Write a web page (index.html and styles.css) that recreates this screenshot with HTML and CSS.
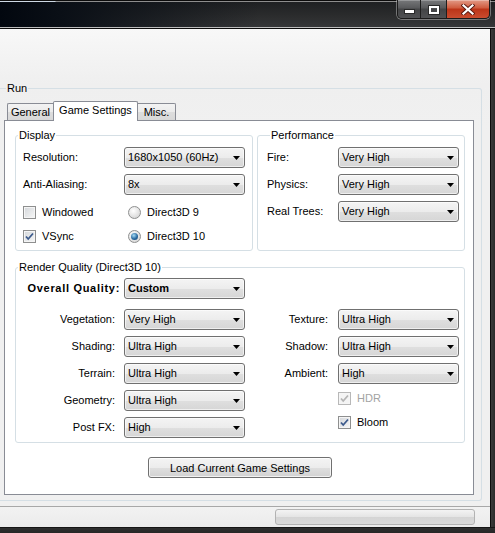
FILE: index.html
```html
<!DOCTYPE html>
<html lang="en">
<head>
    <meta charset="UTF-8">
    <meta name="viewport" content="width=device-width, initial-scale=1.0">
    <title>Game Settings</title>
    <link rel="stylesheet" href="styles.css">
</head>
<body>
    <div class="window">
        <div class="titlebar">
            <div class="caption-buttons">
                <span class="cap-btn cap-min">
                    <svg width="11" height="5" viewBox="0 0 11 5"><rect x="0.5" y="0.5" width="10" height="4" fill="#fff" stroke="#2a2a2a"/></svg>
                </span>
                <span class="cap-btn cap-max">
                    <svg width="12" height="10" viewBox="0 0 12 10"><rect x="0.5" y="0.5" width="11" height="9" fill="none" stroke="#2a2a2a"/><rect x="2" y="2" width="8" height="6" fill="none" stroke="#fff" stroke-width="2"/></svg>
                </span>
                <span class="cap-btn cap-close">
                    <svg width="14" height="11" viewBox="0 0 14 11"><path d="M2.5 1.5 L11.5 9.5 M11.5 1.5 L2.5 9.5" stroke="#5a1a10" stroke-width="4" stroke-linecap="square"/><path d="M2.5 1.5 L11.5 9.5 M11.5 1.5 L2.5 9.5" stroke="#fff" stroke-width="2.2" stroke-linecap="square"/></svg>
                </span>
            </div>
        </div>
        <div class="frame">
            <div class="client">
                <fieldset class="group run">
                    <legend>Run</legend>
                    <div class="tabs">
                        <span class="tab tab-first">General</span>
                        <span class="tab active">Game Settings</span>
                        <span class="tab tab-last">Misc.</span>
                    </div>
                    <div class="tab-panel">
                        <div class="top-groups">
                            <fieldset class="group display">
                                <legend>Display</legend>
                                <div class="display-body">
                                    <div class="field">
                                        <span class="label">Resolution:</span>
                                        <div class="combo"><span>1680x1050 (60Hz)</span><svg class="arrow" width="7" height="4" viewBox="0 0 7 4"><polygon points="0,0 7,0 3.5,4" fill="#000"/></svg></div>
                                    </div>
                                    <div class="field">
                                        <span class="label">Anti-Aliasing:</span>
                                        <div class="combo"><span>8x</span><svg class="arrow" width="7" height="4" viewBox="0 0 7 4"><polygon points="0,0 7,0 3.5,4" fill="#000"/></svg></div>
                                    </div>
                                    <div class="option-row">
                                        <span class="check-item">
                                            <span class="checkbox"></span>Windowed
                                        </span>
                                        <span class="check-item">
                                            <span class="radio"></span>Direct3D 9
                                        </span>
                                    </div>
                                    <div class="option-row">
                                        <span class="check-item">
                                            <span class="checkbox"><svg width="11" height="11" viewBox="0 0 11 11"><polyline points="2,5.5 4.2,8 9,2.5" fill="none" stroke="#3c5a8c" stroke-width="1.8"/></svg></span>VSync
                                        </span>
                                        <span class="check-item">
                                            <span class="radio"><span class="radio-dot"></span></span>Direct3D 10
                                        </span>
                                    </div>
                                </div>
                            </fieldset>
                            <fieldset class="group performance">
                                <legend>Performance</legend>
                                <div class="perf-body">
                                    <div class="field">
                                        <span class="label">Fire:</span>
                                        <div class="combo"><span>Very High</span><svg class="arrow" width="7" height="4" viewBox="0 0 7 4"><polygon points="0,0 7,0 3.5,4" fill="#000"/></svg></div>
                                    </div>
                                    <div class="field">
                                        <span class="label">Physics:</span>
                                        <div class="combo"><span>Very High</span><svg class="arrow" width="7" height="4" viewBox="0 0 7 4"><polygon points="0,0 7,0 3.5,4" fill="#000"/></svg></div>
                                    </div>
                                    <div class="field">
                                        <span class="label">Real Trees:</span>
                                        <div class="combo"><span>Very High</span><svg class="arrow" width="7" height="4" viewBox="0 0 7 4"><polygon points="0,0 7,0 3.5,4" fill="#000"/></svg></div>
                                    </div>
                                </div>
                            </fieldset>
                        </div>

                        <fieldset class="group render">
                            <legend>Render Quality (Direct3D 10)</legend>
                            <div class="render-body">
                                <div class="overall">
                                    <span class="label overall-label">Overall Quality:</span>
                                    <div class="combo bold"><span>Custom</span><svg class="arrow" width="7" height="4" viewBox="0 0 7 4"><polygon points="0,0 7,0 3.5,4" fill="#000"/></svg></div>
                                </div>
                                <div class="quality-grid">
                                    <span class="label">Vegetation:</span>
                                    <div class="combo"><span>Very High</span><svg class="arrow" width="7" height="4" viewBox="0 0 7 4"><polygon points="0,0 7,0 3.5,4" fill="#000"/></svg></div>
                                    <span class="label">Texture:</span>
                                    <div class="combo"><span>Ultra High</span><svg class="arrow" width="7" height="4" viewBox="0 0 7 4"><polygon points="0,0 7,0 3.5,4" fill="#000"/></svg></div>

                                    <span class="label">Shading:</span>
                                    <div class="combo"><span>Ultra High</span><svg class="arrow" width="7" height="4" viewBox="0 0 7 4"><polygon points="0,0 7,0 3.5,4" fill="#000"/></svg></div>
                                    <span class="label">Shadow:</span>
                                    <div class="combo"><span>Ultra High</span><svg class="arrow" width="7" height="4" viewBox="0 0 7 4"><polygon points="0,0 7,0 3.5,4" fill="#000"/></svg></div>

                                    <span class="label">Terrain:</span>
                                    <div class="combo"><span>Ultra High</span><svg class="arrow" width="7" height="4" viewBox="0 0 7 4"><polygon points="0,0 7,0 3.5,4" fill="#000"/></svg></div>
                                    <span class="label">Ambient:</span>
                                    <div class="combo"><span>High</span><svg class="arrow" width="7" height="4" viewBox="0 0 7 4"><polygon points="0,0 7,0 3.5,4" fill="#000"/></svg></div>

                                    <span class="label">Geometry:</span>
                                    <div class="combo"><span>Ultra High</span><svg class="arrow" width="7" height="4" viewBox="0 0 7 4"><polygon points="0,0 7,0 3.5,4" fill="#000"/></svg></div>
                                    <span></span>
                                    <div class="extra-checks">
                                        <span class="check-item disabled">
                                            <span class="checkbox"><svg width="11" height="11" viewBox="0 0 11 11"><polyline points="2,5.5 4.2,8 9,2.5" fill="none" stroke="#b4b4b4" stroke-width="1.8"/></svg></span>HDR
                                        </span>
                                        <span class="check-item">
                                            <span class="checkbox"><svg width="11" height="11" viewBox="0 0 11 11"><polyline points="2,5.5 4.2,8 9,2.5" fill="none" stroke="#3c5a8c" stroke-width="1.8"/></svg></span>Bloom
                                        </span>
                                    </div>

                                    <span class="label">Post FX:</span>
                                    <div class="combo"><span>High</span><svg class="arrow" width="7" height="4" viewBox="0 0 7 4"><polygon points="0,0 7,0 3.5,4" fill="#000"/></svg></div>
                                </div>
                            </div>
                        </fieldset>

                        <div class="actions">
                            <button class="button">Load Current Game Settings</button>
                        </div>
                    </div>
                </fieldset>
                <div class="statusbar">
                    <div class="progress"></div>
                </div>
            </div>
            <div class="frame-right"></div>
        </div>
        <div class="frame-bottom"></div>
    </div>
</body>
</html>
```

FILE: styles.css
```css
body {
    margin: 0;
    font-family: "Liberation Sans", Arial, sans-serif;
    font-size: 11px;
    line-height: 13px;
    color: #000;
    background: #2a2a2a;
    overflow: hidden;
}
.window {
    width: 495px;
    height: 533px;
    display: flex;
    flex-direction: column;
}

/* title bar */
.titlebar {
    height: 29px;
    flex: none;
    display: flex;
    justify-content: flex-end;
    align-items: flex-start;
    background:
        linear-gradient(to bottom, #0b0b0b 0 1px, transparent 1px 27px, #bdbdbd 27px 28px, #0c0c0c 28px),
        linear-gradient(to right, #cdd8e4 0, #cdd8e4 55px, #8d8d8d 56px) top / 100% 2px no-repeat,
        linear-gradient(to right, #02070f 0, #0a0f16 60px, rgba(40, 40, 40, 0) 260px),
        linear-gradient(to bottom, #1d1f21, #2b2c2d 55%, #37383a);
}
.caption-buttons {
    display: flex;
    height: 18px;
    margin-right: 5px;
    border: 1px solid #1a1a1a;
    border-top: none;
    border-radius: 0 0 5px 5px;
    overflow: hidden;
    box-shadow: 0 0 0 1px rgba(210, 210, 210, 0.45);
}
.cap-btn {
    display: flex;
    align-items: center;
    justify-content: center;
    height: 18px;
    box-sizing: border-box;
    padding-top: 1px;
}
.cap-min, .cap-max {
    background: linear-gradient(#77787a, #58595b 45%, #434446 50%, #505153);
    border-right: 1px solid #1e1e1e;
    box-shadow: inset 0 1px 0 rgba(255, 255, 255, 0.25);
}
.cap-min {
    width: 23px;
    align-items: flex-end;
    padding-bottom: 4px;
}
.cap-max {
    width: 26px;
}
.cap-close {
    width: 42px;
    background: linear-gradient(#e29a86, #cf5a3d 45%, #bb3418 50%, #c94c2f);
    box-shadow: inset 0 1px 0 rgba(255, 255, 255, 0.3);
}

/* window frame */
.frame {
    flex: 1;
    display: flex;
    min-height: 0;
}
.client {
    flex: 1;
    display: flex;
    flex-direction: column;
    padding-top: 53px;
    background: linear-gradient(#f8f8f8 0, #f3f3f3 30px, #efefef 55px, #f0f0f0 100px);
}
.frame-right {
    width: 6px;
    background: linear-gradient(to right, #0d0d0d 0 1px, #3b3b3b 1px, #2b2b2b);
}
.frame-bottom {
    height: 6px;
    flex: none;
    background: linear-gradient(#151515 0 1px, #2e2e2e 1px, #262626);
}

/* group boxes */
.group {
    margin: 0;
    padding: 0;
    min-width: 0;
    border: 1px solid #d5dfe5;
    border-radius: 3px;
}
.group legend {
    padding: 0 1px;
    margin-left: 6px;
    line-height: 13px;
}
.run {
    margin-right: 8px;
    padding: 6px 7px 5px 4px;
    border-left: none;
    border-radius: 0 3px 3px 0;
}
.run legend {
    margin-left: 2px;
}

/* tabs */
.tabs {
    display: flex;
    align-items: flex-end;
    margin-left: 3px;
    margin-bottom: -1px;
}
.tab {
    display: flex;
    align-items: center;
    justify-content: center;
    box-sizing: border-box;
    height: 17px;
    margin-bottom: 1px;
    border: 1px solid #898c95;
    border-bottom: none;
    background: linear-gradient(#f3f3f3, #ebebeb 50%, #dddddd 51%, #d8d8d8);
}
.tab-first {
    width: 46px;
    border-right: none;
    border-radius: 2px 0 0 0;
}
.tab-last {
    width: 38px;
    border-left: none;
    border-radius: 0 2px 0 0;
}
.tab.active {
    position: relative;
    z-index: 1;
    width: 85px;
    height: 20px;
    margin-bottom: 0;
    background: #fff;
    border-radius: 2px 2px 0 0;
    padding-bottom: 2px;
}
.tab-panel {
    border: 1px solid #898c95;
    background: #fff;
    padding: 8px 8px 16px 10px;
}
.top-groups {
    display: flex;
    gap: 4px;
}
.display {
    width: 238px;
    box-sizing: border-box;
}
.performance {
    width: 208px;
    box-sizing: border-box;
}
.performance legend {
    margin-left: 12px;
}

/* rows */
.field {
    display: flex;
    align-items: center;
    margin-bottom: 6px;
}
.display-body {
    padding: 5px 0 7px 7px;
}
.display-body .label {
    width: 101px;
}
.display-body .field + .field {
    margin-bottom: 11px;
}
.option-row {
    display: flex;
    height: 13px;
}
.option-row + .option-row {
    margin-top: 11px;
}
.option-row .check-item:first-child {
    width: 105px;
}
.perf-body {
    padding: 5px 0 0 9px;
}
.perf-body .label {
    width: 71px;
}

.check-item {
    display: flex;
    align-items: center;
    gap: 6px;
    height: 13px;
}
.check-item.disabled {
    color: #a3a3a3;
}
.checkbox {
    width: 13px;
    height: 13px;
    box-sizing: border-box;
    border: 1px solid #8e8f8f;
    background: linear-gradient(135deg, #d3d6da, #f7f7f7);
    box-shadow: inset 0 0 0 1px #f5f5f5;
    display: flex;
    align-items: center;
    justify-content: center;
}
.disabled .checkbox {
    border-color: #b8b8b8;
    background: #f4f4f4;
}
.radio {
    width: 13px;
    height: 13px;
    box-sizing: border-box;
    border: 1px solid #8e8f8f;
    border-radius: 50%;
    background: radial-gradient(circle at 40% 35%, #ffffff, #dcdcdc 70%, #cfd2d6);
    display: flex;
    align-items: center;
    justify-content: center;
}
.radio-dot {
    width: 7px;
    height: 7px;
    border-radius: 50%;
    background: radial-gradient(circle at 40% 35%, #a6dcf6, #2a6aa0 55%, #123f6c);
}

/* combo boxes and buttons */
.combo {
    width: 121px;
    height: 21px;
    box-sizing: border-box;
    border: 1px solid #707070;
    border-radius: 3px;
    padding: 0 4px 0 3px;
    display: flex;
    align-items: center;
    justify-content: space-between;
    background: linear-gradient(#f4f4f4, #ececec 50%, #dfdfdf 51%, #d6d6d6);
    box-shadow: inset 0 0 0 1px rgba(255, 255, 255, 0.6);
}
.combo.bold {
    font-weight: bold;
}
.arrow {
    flex: none;
}

.render {
    margin-top: 10px;
}
.render-body {
    padding: 4px 0 4px 0;
}
.overall {
    display: flex;
    align-items: center;
    margin-bottom: 10px;
}
.overall-label {
    width: 108px;
    box-sizing: border-box;
    text-align: right;
    padding-right: 4px;
    font-weight: bold;
    letter-spacing: 0.7px;
}
.quality-grid {
    display: grid;
    grid-template-columns: 108px 121px 93px 121px;
    grid-auto-rows: 21px;
    row-gap: 6px;
    align-items: center;
}
.quality-grid .label {
    text-align: right;
    padding-right: 9px;
}
.quality-grid .label:nth-child(4n+3) {
    padding-right: 10px;
}
.extra-checks {
    grid-row: span 2;
    align-self: start;
    display: flex;
    flex-direction: column;
    gap: 11px;
    padding-top: 2px;
}

.actions {
    display: flex;
    justify-content: center;
    margin-top: 14px;
}
.button {
    width: 184px;
    height: 21px;
    border: 1px solid #707070;
    border-radius: 3px;
    font-family: inherit;
    font-size: 11px;
    color: #000;
    padding: 0;
    background: linear-gradient(#f4f4f4, #ececec 50%, #dfdfdf 51%, #d2d2d2);
    box-shadow: inset 0 0 0 1px rgba(255, 255, 255, 0.7);
}

/* status bar */
.statusbar {
    margin-top: 5px;
    height: 21px;
    box-sizing: border-box;
    border-top: 1px solid #a8a8a8;
    background: linear-gradient(#f2f2f2, #ebebeb);
    display: flex;
    justify-content: flex-end;
    padding: 2px 15px 0 0;
}
.progress {
    width: 200px;
    height: 16px;
    box-sizing: border-box;
    border: 1px solid #b2b2b2;
    border-radius: 3px;
    background: linear-gradient(#f3f3f3, #e4e4e4 50%, #d4d4d4 51%, #dadada);
}
```
